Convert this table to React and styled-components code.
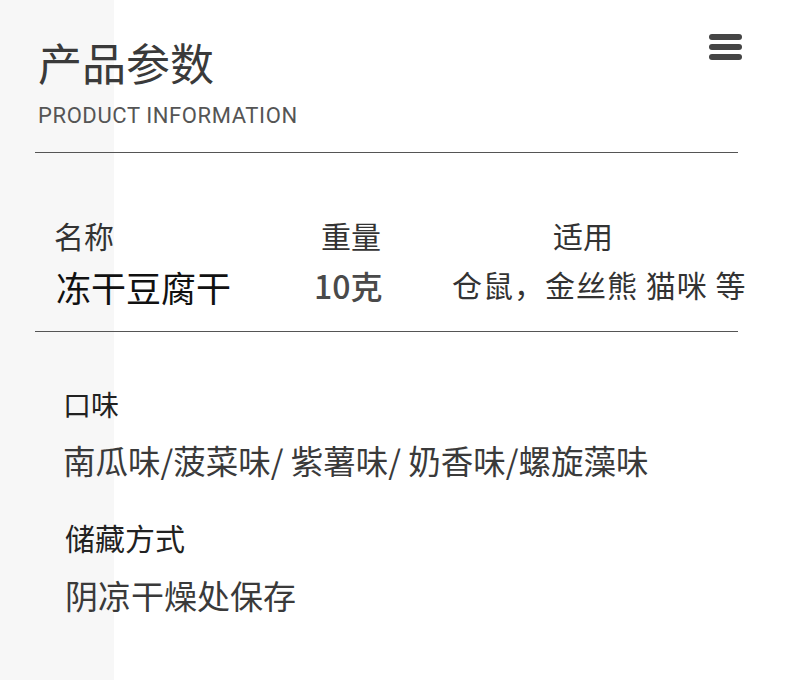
import React from 'react';
import styled, { createGlobalStyle } from 'styled-components';

const GlobalStyle = createGlobalStyle`
  html, body {
    margin: 0;
    padding: 0;
  }
  body {
    width: 790px;
    height: 680px;
    overflow: hidden;
    background: linear-gradient(to right, #f7f7f7 114px, #ffffff 114px);
    font-family: "Noto Sans CJK SC", "Noto Sans", sans-serif;
    color: #333;
  }
`;

const Page = styled('div')`
  width: 703px;
  padding: 30px 0 0 35px;
`;

const Header = styled('div')`
  display: flex;
  justify-content: space-between;
  align-items: flex-start;
  padding: 10px 0 0 3px;
`;

const Title = styled('h1')`
  margin: 0;
  font-size: 44px;
  line-height: 1;
  font-weight: 400;
  color: #3a3a3a;
`;

const Subtitle = styled('div')`
  margin-top: 21px;
  font-family: Roboto, "Liberation Sans", sans-serif;
  font-size: 22px;
  line-height: 1;
  font-weight: 400;
  color: #555;
  letter-spacing: 0.6px;
`;

const MenuButton = styled('div')`
  display: flex;
  flex-direction: column;
  gap: 4px;
  margin: -6px -4px 0 0;
`;

const MenuBar = styled('span')`
  display: block;
  width: 33px;
  height: 6px;
  border-radius: 3px;
  background: #454545;
`;

const Divider = styled('div')`
  height: 1px;
  background: #555;
  margin-top: ${p => p.top}px;
`;

const Specs = styled('div')`
  display: grid;
  grid-template-columns: 230px 180px 1fr;
  row-gap: 19px;
  padding: 67px 0 27px;
`;

const Label = styled('div')`
  font-size: 30px;
  line-height: 1;
  color: #333;
  padding-left: ${p => p.indent || 0}px;
`;

const Value = styled('div')`
  font-size: ${p => p.size}px;
  line-height: 1;
  font-weight: ${p => p.weight || 400};
  color: ${p => p.color};
  padding-left: ${p => p.indent || 0}px;
  letter-spacing: ${p => p.spacing || 0}px;
  white-space: nowrap;
`;

const Section = styled('div')`
  padding-left: ${p => p.indent}px;
  margin-top: ${p => p.top}px;
`;

const SectionTitle = styled('div')`
  font-size: ${p => p.size}px;
  line-height: 1;
  color: #222;
`;

const SectionText = styled('div')`
  margin-top: ${p => p.gap}px;
  font-size: ${p => p.size}px;
  line-height: 1;
  color: #3a3a3a;
  white-space: nowrap;
`;

const App = () => {
  return (
    <>
      <GlobalStyle />
      <Page>
        <Header>
          <div>
            <Title>产品参数</Title>
            <Subtitle>PRODUCT INFORMATION</Subtitle>
          </div>
          <MenuButton>
            <MenuBar />
            <MenuBar />
            <MenuBar />
          </MenuButton>
        </Header>
        <Divider top={25} />
        <Specs>
          <Label indent={19}>名称</Label>
          <Label indent={56}>重量</Label>
          <Label indent={108}>适用</Label>
          <Value size={35} color="#111" indent={21}>冻干豆腐干</Value>
          <Value size={32} weight={500} color="#4a4a4a" indent={49}>10克</Value>
          <Value size={30} color="#333" indent={7} spacing={1}>仓鼠，金丝熊 猫咪 等</Value>
        </Specs>
        <Divider top={0} />
        <Section indent={28} top={58}>
          <SectionTitle size={28}>口味</SectionTitle>
          <SectionText size={32.5} gap={26}>南瓜味/菠菜味/ 紫薯味/ 奶香味/螺旋藻味</SectionText>
        </Section>
        <Section indent={30} top={45}>
          <SectionTitle size={30}>储藏方式</SectionTitle>
          <SectionText size={33} gap={27}>阴凉干燥处保存</SectionText>
        </Section>
      </Page>
    </>
  );
};

export default App;
